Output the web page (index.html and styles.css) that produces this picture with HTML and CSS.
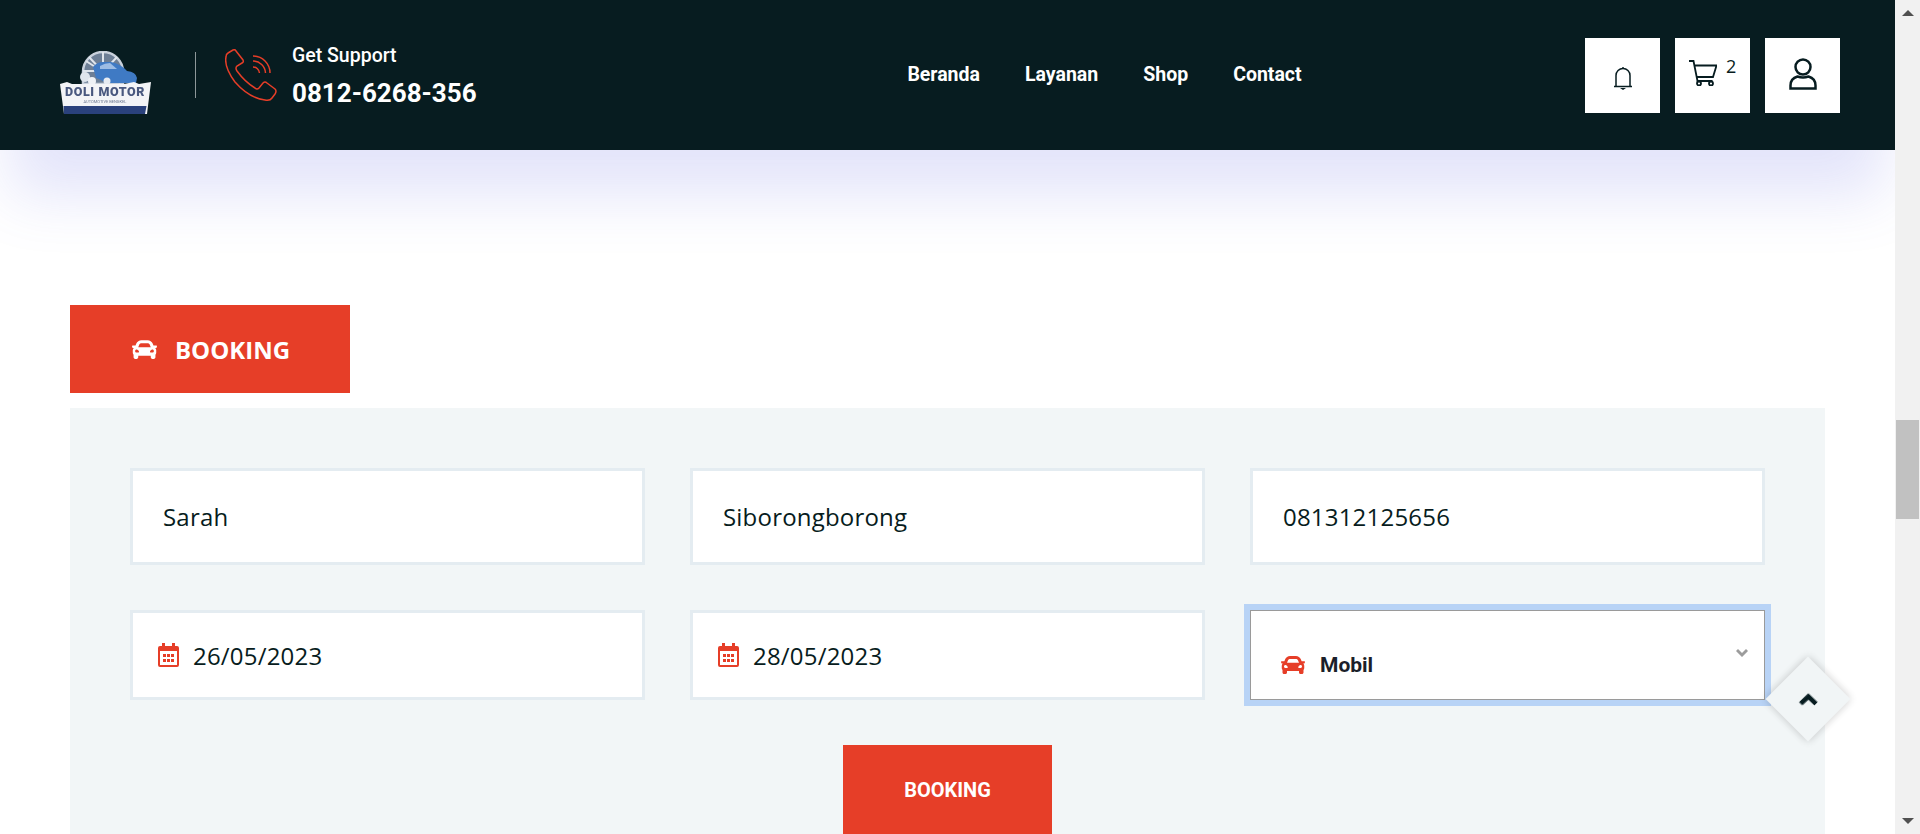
FILE: index.html
```html
<!DOCTYPE html>
<html lang="en">
<head>
    <meta charset="UTF-8">
    <meta name="viewport" content="width=device-width, initial-scale=1.0">
    <title>Booking - Doli Motor</title>
    <link rel="stylesheet" href="styles.css">
</head>
<body>
    <svg class="icon-defs" width="0" height="0">
        <symbol id="car" viewBox="0 0 512 512">
            <path fill="currentColor" d="M499.99 176h-59.87l-16.64-41.6C406.38 91.63 365.57 64 319.5 64h-127c-46.06 0-86.88 27.63-103.99 70.4L71.87 176H12.01C4.2 176-1.53 183.34.37 190.91l6 24C7.7 220.25 12.5 224 18.01 224h20.07C24.65 235.73 16 252.78 16 272v48c0 16.12 6.16 30.67 16 41.93V416c0 17.67 14.33 32 32 32h32c17.67 0 32-14.33 32-32v-32h256v32c0 17.67 14.33 32 32 32h32c17.67 0 32-14.33 32-32v-54.07c9.84-11.25 16-25.8 16-41.93v-48c0-19.22-8.65-36.27-22.07-48H494c5.51 0 10.31-3.75 11.64-9.09l6-24c1.89-7.57-3.84-14.91-11.65-14.91zm-352.06-17.83c7.29-18.22 24.94-30.17 44.57-30.17h127c19.63 0 37.28 11.95 44.57 30.17L384 208H128l19.93-49.83zM96 319.8c-19.2 0-32-12.76-32-31.9S76.8 256 96 256s48 28.71 48 47.85-28.8 15.95-48 15.95zm320 0c-19.2 0-48 3.19-48-15.95S396.8 256 416 256s32 12.76 32 31.9-12.8 31.9-32 31.9z"/>
        </symbol>
        <symbol id="calendar" viewBox="0 0 21 24">
            <path fill="currentColor" d="M4 0h3v3h7V0h3v3h2a2 2 0 0 1 2 2v17a2 2 0 0 1-2 2H2a2 2 0 0 1-2-2V5a2 2 0 0 1 2-2h2z"/>
            <rect x="2" y="8" width="17" height="14" fill="#fff"/>
            <path fill="currentColor" d="M5 11h3v3H5zM9 11h3v3H9zM13 11h3v3h-3zM5 16h3v3H5zM9 16h3v3H9zM13 16h3v3h-3z"/>
        </symbol>
    </svg>

    <div class="page">
        <div class="main">
            <header class="topbar">
                <div class="brand">
                    <svg class="logo" viewBox="0 0 92 66" aria-label="Doli Motor">
                        <path d="M24 33V21A20 20 0 0 1 64 21V33z" fill="#6d7f96" stroke="#c9d1dc" stroke-width="2.500"/>
                        <path d="M44 1v20M30 6l14 15M58 6L44 21M24 20h40M27 10l34 22" stroke="#dfe5ec" stroke-width="2"/>
                        <circle cx="26" cy="26" r="5" fill="#dfe5ec"/>
                        <circle cx="33" cy="30" r="4" fill="#eef1f5"/>
                        <path d="M34 16q4-5 10-5h8q10 2 16 9 9 1 10 7l-1 5H47l-5-3-5-2z" fill="#3f7ac4"/>
                        <path d="M41 15q5-3 10-3l7 6-17 0z" fill="#9cbce4"/>
                        <circle cx="48" cy="30" r="3.500" fill="#e6ebf2"/>
                        <path d="M1 33l7-2 5 2h52l10-2 5 2 12-2-4 32H5z" fill="#f3f4f7"/>
                        <path d="M4.500 55h83L86 63H5z" fill="#2a417c"/>
                        <text x="46" y="45" text-anchor="middle" class="logo-name">DOLI MOTOR</text>
                        <text x="46" y="52" text-anchor="middle" class="logo-sub">AUTOMOTIVE BENGKEL</text>
                    </svg>
                    <span class="divider"></span>
                    <svg class="phone" viewBox="0 0 52 52" fill="none" stroke="#e63e28" stroke-width="1.5">
                        <path d="M3 4L8 1Q10 0 11 2L18 11Q19 13 17 14L12 17Q10 19 12 22Q20 33 30 39Q32 41 34 39L38 34Q40 32 42 34L50 40Q52 42 50 45L47 49Q45 52 40 51Q24 49 10 33Q-1 18 1 8Q1 5 3 4Z"/>
                        <path d="M28 7A17 17 0 0 1 45 24M28 12A12.500 12.500 0 0 1 40.500 24M28 18A6.500 6.500 0 0 1 34.500 24"/>
                    </svg>
                    <div class="support">
                        <span class="support-label">Get Support</span>
                        <span class="support-number">0812-6268-356</span>
                    </div>
                </div>
                <nav class="menu">
                    <a href="#">Beranda</a>
                    <a href="#">Layanan</a>
                    <a href="#">Shop</a>
                    <a href="#">Contact</a>
                </nav>
                <div class="actions">
                    <a class="action" href="#">
                        <svg class="bell" viewBox="0 0 20 24" fill="none" stroke="#071c20" stroke-width="1.500">
                            <path d="M1 20.500h18M3 20.500V9.500a7 7 0 0 1 14 0v11M10 2.500V1"/>
                            <path d="M7 22h6l-3 2z" fill="#071c20" stroke="none"/>
                        </svg>
                    </a>
                    <a class="action" href="#">
                        <svg class="cart" viewBox="0 0 28 26" fill="none" stroke="#071c20" stroke-width="1.800">
                            <path d="M0 1h4.500l4 20h15M5.500 5.500h22L24 17H8"/>
                            <circle cx="10" cy="23.500" r="2"/>
                            <circle cx="22" cy="23.500" r="2"/>
                        </svg>
                        <span class="cart-count">2</span>
                    </a>
                    <a class="action" href="#">
                        <svg class="user" viewBox="0 0 28 32" fill="none" stroke="#071c20" stroke-width="2.500">
                            <circle cx="14" cy="9" r="7.500"/>
                            <path d="M1.500 30.500v-3q0-7 7-9 5.500 2 11 0 7 2 7 9v3z"/>
                        </svg>
                    </a>
                </div>
            </header>

            <section class="content">
                <div class="tab">
                    <svg class="tab-car"><use href="#car"/></svg>
                    <span>BOOKING</span>
                </div>
                <form class="panel">
                    <div class="fields">
                        <input class="field" type="text" value="Sarah">
                        <input class="field" type="text" value="Siborongborong">
                        <input class="field" type="text" value="081312125656">
                        <label class="field date">
                            <svg class="cal"><use href="#calendar"/></svg>
                            <input type="text" value="26/05/2023">
                        </label>
                        <label class="field date">
                            <svg class="cal"><use href="#calendar"/></svg>
                            <input type="text" value="28/05/2023">
                        </label>
                        <div class="select">
                            <svg class="select-car"><use href="#car"/></svg>
                            <span class="select-value">Mobil</span>
                            <svg class="select-arrow" viewBox="0 0 12 8"><path d="M0 2l2-2 4 4 4-4 2 2-6 6z"/></svg>
                        </div>
                    </div>
                    <button class="submit" type="button">BOOKING</button>
                </form>
            </section>
        </div>

        <div class="scrollbar">
            <span class="arrow-up"></span>
            <span class="thumb"></span>
            <span class="arrow-down"></span>
        </div>
    </div>

    <a class="to-top" href="#">
        <svg viewBox="0 0 20 13"><path d="M10 0l10 9.500-3.500 3.500L10 7l-6.500 6L0 9.500z"/></svg>
    </a>
</body>
</html>
```

FILE: styles.css
```css
body {
    margin: 0;
    height: 834px;
    overflow: hidden;
    background-color: #fff;
    color: #071c20;
    font-family: "Open Sans", sans-serif;
}

.icon-defs {
    position: absolute;
}

.page {
    display: flex;
    height: 834px;
}

.main {
    flex: 1;
    min-width: 0;
    overflow: hidden;
}

/* header */
.topbar {
    height: 150px;
    display: flex;
    align-items: center;
    justify-content: space-between;
    background-color: #071c20;
    box-shadow: 0 55px 60px -10px rgba(90, 95, 225, 0.17);
    padding: 0 55px 0 59px;
    position: relative;
}

.brand {
    display: flex;
    align-items: center;
    width: 600px;
}

.logo {
    width: 92px;
    height: 66px;
    margin-top: 18px;
    filter: blur(0.7px);
}

.logo-name {
    font-family: "Roboto", sans-serif;
    font-weight: 900;
    font-size: 12.500px;
    letter-spacing: 0.6px;
    fill: #49587f;
}

.logo-sub {
    font-family: "Roboto", sans-serif;
    font-size: 4px;
    fill: #6a7690;
}

.divider {
    width: 1px;
    height: 46px;
    background-color: #8d9799;
    margin: 0 29px 0 44px;
}

.phone {
    width: 52px;
    height: 52px;
    margin-right: 15px;
}

.support {
    display: flex;
    flex-direction: column;
    gap: 11px;
    margin-top: 3px;
    color: #fff;
    font-family: "Roboto", sans-serif;
}

.support-label {
    font-size: 19.500px;
    font-weight: 500;
    line-height: 22px;
}

.support-number {
    font-size: 26px;
    font-weight: 700;
    line-height: 30px;
}

.menu {
    display: flex;
    gap: 45px;
    margin: -2px 0 0 -35px;
}

.menu a {
    color: #fff;
    font-family: "Roboto", sans-serif;
    font-size: 19.500px;
    font-weight: 700;
    text-decoration: none;
}

.actions {
    display: flex;
    gap: 15px;
}

.action {
    width: 75px;
    height: 75px;
    display: flex;
    align-items: center;
    justify-content: center;
    background-color: #fff;
    color: #071c20;
    text-decoration: none;
    position: relative;
}

.bell {
    width: 20px;
    height: 24px;
    margin-top: 5px;
}

.cart {
    width: 28px;
    height: 26px;
    margin: 0 19px 5px 0;
}

.cart-count {
    position: absolute;
    top: 16px;
    left: 51px;
    font-size: 18px;
    line-height: 24px;
}

.user {
    width: 28px;
    height: 32px;
    margin-bottom: 3px;
}

/* booking */
.content {
    padding: 155px 70px 0;
}

.tab {
    width: 280px;
    height: 88px;
    box-sizing: border-box;
    padding-left: 2px;
    display: flex;
    align-items: center;
    justify-content: center;
    gap: 18px;
    margin-bottom: 15px;
    background-color: #e63e28;
    color: #fff;
    font-size: 24px;
    font-weight: 700;
}

.tab-car {
    width: 25px;
    height: 25px;
}

.panel {
    background-color: #f2f6f7;
    padding: 60px;
}

.fields {
    display: grid;
    grid-template-columns: repeat(3, 515px);
    grid-template-rows: 97px 90px;
    column-gap: 45px;
    row-gap: 45px;
}

.field {
    box-sizing: border-box;
    border: 3px solid #e4ecf1;
    background-color: #fff;
    padding: 0 30px;
    font-family: "Open Sans", sans-serif;
    font-size: 24px;
    font-weight: 500;
    letter-spacing: 0.2px;
    color: #071c20;
    outline: none;
}

.date {
    display: flex;
    align-items: center;
    gap: 14px;
    padding: 0 25px;
}

.date input {
    flex: 1;
    min-width: 0;
    border: none;
    padding: 0;
    outline: none;
    background: none;
    font: inherit;
    letter-spacing: inherit;
    color: inherit;
}

.cal {
    width: 21px;
    height: 24px;
    color: #e63e28;
}

.select {
    box-sizing: border-box;
    display: flex;
    align-items: center;
    background-color: #fff;
    border: 1px solid #9a9a9a;
    outline: 6px solid #b8d3f6;
    padding: 20px 16px 0 30px;
}

.select-car {
    width: 24px;
    height: 24px;
    color: #e63e28;
    margin-right: 15px;
}

.select-value {
    flex: 1;
    font-family: "Roboto", sans-serif;
    font-size: 21px;
    font-weight: 700;
    color: #1b1f2a;
}

.select-arrow {
    width: 12px;
    height: 8px;
    margin-top: -24px;
    fill: #9c9c9c;
}

.submit {
    display: block;
    width: 209px;
    height: 120px;
    margin: 45px auto 0;
    border: none;
    background-color: #e63e28;
    color: #fff;
    font-family: "Roboto", sans-serif;
    font-size: 20px;
    font-weight: 700;
    padding-bottom: 32px;
}

/* fake browser scrollbar */
.scrollbar {
    width: 25px;
    height: 834px;
    display: flex;
    flex-direction: column;
    align-items: center;
    background-color: #f1f1f1;
}

.arrow-up {
    margin-top: 10px;
    border: 6px solid transparent;
    border-top: none;
    border-bottom-color: #505050;
}

.thumb {
    width: 23px;
    height: 99px;
    margin-top: 404px;
    background-color: #c1c1c1;
}

.arrow-down {
    margin-top: 299px;
    border: 6px solid transparent;
    border-bottom: none;
    border-top-color: #505050;
}

/* back to top */
.to-top {
    position: fixed;
    left: 1778px;
    top: 669px;
    width: 60px;
    height: 60px;
    display: flex;
    align-items: center;
    justify-content: center;
    background-color: #f1f5f6;
    box-shadow: 0 0 8px rgba(0, 0, 0, 0.2);
    transform: rotate(45deg);
}

.to-top svg {
    width: 19px;
    height: 12px;
    fill: #071c20;
    transform: rotate(-45deg);
}
```
